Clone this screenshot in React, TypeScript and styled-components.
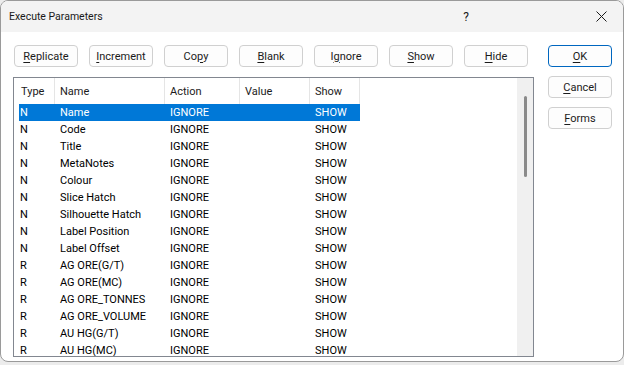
import styled, { createGlobalStyle } from "styled-components";

const GlobalStyle = createGlobalStyle`
html,
body {
  margin: 0;
  padding: 0;
  width: 100%;
  height: 100%;
  background: #ececec;
  font-family: Roboto, "Liberation Sans", sans-serif;
}
`;

const Window = styled.div`
  width: 624px;
  height: 362px;
  box-sizing: border-box;
  border: 1px solid #9a9a9a;
  border-radius: 8px;
  background: #ffffff;
  overflow: hidden;
  display: flex;
  flex-direction: column;
`;

const TitleBar = styled.div`
  height: 31px;
  flex: 0 0 31px;
  background: #f3f3f3;
  display: flex;
  align-items: center;
  padding-left: 8px;
  font-size: 10.5px;
  color: #1a1a1a;
`;

const Title = styled.span`
  flex: 1;
`;

const HelpGlyph = styled.span`
  width: 20px;
  text-align: center;
  font-size: 12px;
  margin-right: 115px;
`;

const CloseBox = styled.span`
  width: 20px;
  height: 20px;
  display: flex;
  align-items: center;
  justify-content: center;
  margin-right: 12px;
`;

const Body = styled.div`
  flex: 1;
  display: flex;
  padding: 13px 0 0 13px;
  min-height: 0;
`;

const Main = styled.div`
  display: flex;
  flex-direction: column;
  width: 520px;
`;

const ButtonRow = styled.div`
  display: flex;
  gap: 11px;
`;

const Side = styled.div`
  display: flex;
  flex-direction: column;
  gap: 9px;
  margin-left: 14px;
`;

interface BtnProps {
  readonly $default?: boolean;
}

const Button = styled.div<BtnProps>`
  width: 64px;
  height: 22px;
  box-sizing: border-box;
  border: 1px solid ${({ $default }) => ($default ? "#0067c0" : "#d0d0d0")};
  border-radius: 4px;
  background: #fdfdfd;
  font-size: 11px;
  color: #1b1b1b;
  display: flex;
  align-items: center;
  justify-content: center;
  u {
    text-decoration: underline;
    text-underline-offset: 2px;
  }
`;

const ListBox = styled.div`
  margin-top: 10px;
  margin-left: -1px;
  width: 521px;
  height: 280px;
  box-sizing: border-box;
  border: 1px solid #828790;
  display: flex;
  overflow: hidden;
`;

const ListArea = styled.div`
  flex: 1;
  padding-left: 5px;
  overflow: hidden;
`;

const COLS = "36px 110px 75px 70px 50px";

const HeaderRow = styled.div`
  display: grid;
  grid-template-columns: ${COLS};
  width: max-content;
  height: 26px;
  font-size: 11px;
  color: #1b1b1b;
`;

interface CellProps {
  readonly $first?: boolean;
}

const HeaderCell = styled.div<CellProps>`
  display: flex;
  align-items: center;
  padding-left: ${({ $first }) => ($first ? "2px" : "5px")};
  border-right: 1px solid #e5e5e5;
`;

interface RowProps {
  readonly $selected?: boolean;
}

const Row = styled.div<RowProps>`
  display: grid;
  grid-template-columns: ${COLS};
  width: max-content;
  height: 17px;
  font-size: 11px;
  background: ${({ $selected }) => ($selected ? "#0078d7" : "transparent")};
  color: ${({ $selected }) => ($selected ? "#ffffff" : "#000000")};
`;

const Cell = styled.div<CellProps>`
  display: flex;
  align-items: center;
  padding-left: ${({ $first }) => ($first ? "1px" : "5px")};
  white-space: nowrap;
`;

const ScrollTrack = styled.div`
  width: 16px;
  flex: 0 0 16px;
  background: #f0f0f0;
  padding-top: 18px;
  display: flex;
  justify-content: center;
`;

const ScrollThumb = styled.div`
  width: 3px;
  height: 81px;
  border-radius: 2px;
  background: #8a8a8a;
`;

const rows: [string, string][] = [
  ["N", "Name"],
  ["N", "Code"],
  ["N", "Title"],
  ["N", "MetaNotes"],
  ["N", "Colour"],
  ["N", "Slice Hatch"],
  ["N", "Silhouette Hatch"],
  ["N", "Label Position"],
  ["N", "Label Offset"],
  ["R", "AG ORE(G/T)"],
  ["R", "AG ORE(MC)"],
  ["R", "AG ORE_TONNES"],
  ["R", "AG ORE_VOLUME"],
  ["R", "AU HG(G/T)"],
  ["R", "AU HG(MC)"],
];

const Key = ({ pre, k, post }: { pre?: string; k: string; post?: string }) => (
  <span>
    {pre}
    <u>{k}</u>
    {post}
  </span>
);

const App = () => {
  return (
    <>
      <GlobalStyle />
      <Window>
        <TitleBar>
          <Title>Execute Parameters</Title>
          <HelpGlyph>?</HelpGlyph>
          <CloseBox>
            <svg width="11" height="11" viewBox="0 0 11 11">
              <path d="M0.5 0.5 L10.5 10.5 M10.5 0.5 L0.5 10.5" stroke="#1a1a1a" strokeWidth="1" />
            </svg>
          </CloseBox>
        </TitleBar>
        <Body>
          <Main>
            <ButtonRow>
              <Button><Key k="R" post="eplicate" /></Button>
              <Button><Key k="I" post="ncrement" /></Button>
              <Button><Key pre="Co" k="p" post="y" /></Button>
              <Button><Key k="B" post="lank" /></Button>
              <Button><Key pre="I" k="g" post="nore" /></Button>
              <Button><Key k="S" post="how" /></Button>
              <Button><Key k="H" post="ide" /></Button>
            </ButtonRow>
            <ListBox>
              <ListArea>
                <HeaderRow>
                  <HeaderCell $first>Type</HeaderCell>
                  <HeaderCell>Name</HeaderCell>
                  <HeaderCell>Action</HeaderCell>
                  <HeaderCell>Value</HeaderCell>
                  <HeaderCell>Show</HeaderCell>
                </HeaderRow>
                {rows.map(([type, name], i) => (
                  <Row key={name} $selected={i === 0}>
                    <Cell $first>{type}</Cell>
                    <Cell>{name}</Cell>
                    <Cell>IGNORE</Cell>
                    <Cell></Cell>
                    <Cell>SHOW</Cell>
                  </Row>
                ))}
              </ListArea>
              <ScrollTrack>
                <ScrollThumb />
              </ScrollTrack>
            </ListBox>
          </Main>
          <Side>
            <Button $default><Key k="O" post="K" /></Button>
            <Button><Key k="C" post="ancel" /></Button>
            <Button><Key k="F" post="orms" /></Button>
          </Side>
        </Body>
      </Window>
    </>
  );
};

export default App;
